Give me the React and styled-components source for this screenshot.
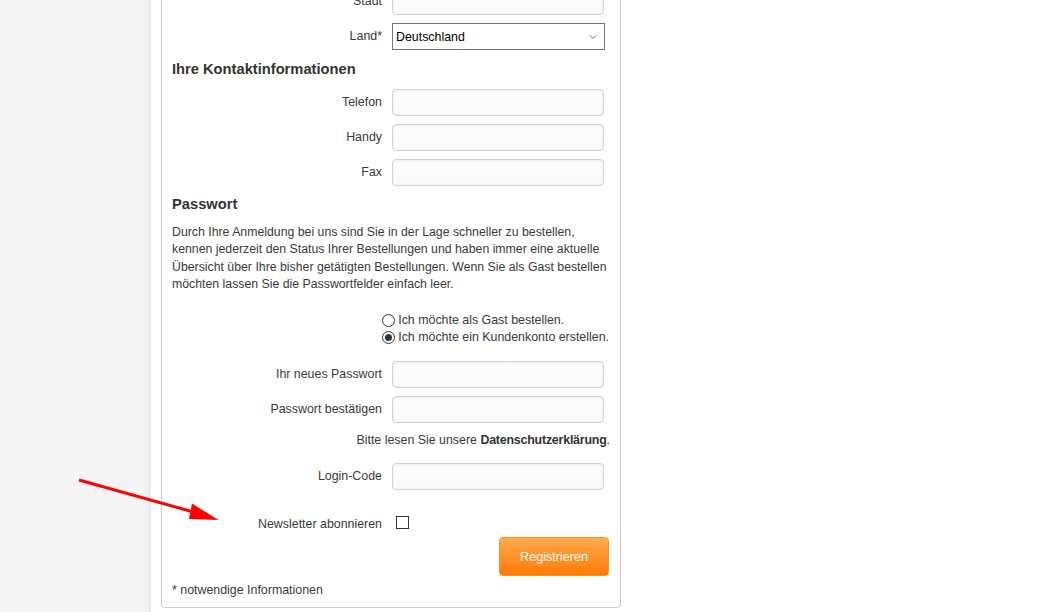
import React from "react";
import styled, { createGlobalStyle } from "styled-components";
import { ChevronDown } from "lucide-react";

const GlobalStyle = createGlobalStyle`
  html, body { margin: 0; padding: 0; }
  body {
    background: #f5f5f5;
    font-family: "Liberation Sans", Arial, sans-serif;
    color: #3a3a3a;
    overflow: hidden;
  }
`;

const Viewport = styled.div`
  position: relative;
  width: 1061px;
  height: 612px;
  overflow: hidden;
`;

const Page = styled.div`
  margin-left: 151px;
  min-height: 640px;
  background: #ffffff;
  box-shadow: -3px 0 6px rgba(0, 0, 0, 0.06);
  padding-left: 10px;
`;

const Panel = styled.div`
  width: 460px;
  box-sizing: border-box;
  margin-top: -13px;
  border: 1px solid #cccccc;
  border-radius: 4px;
  padding: 0 10px 8px 10px;
  display: flex;
  flex-direction: column;
`;

const FormRow = styled.div`
  display: grid;
  grid-template-columns: 210px 212px;
  column-gap: 10px;
  align-items: center;
  margin-top: ${(p) => p.$mt || 0}px;
`;

const Label = styled.label`
  text-align: right;
  font-size: 12.4px;
  line-height: 17px;
  color: #3a3a3a;
  white-space: nowrap;
`;

const TextInput = styled.input`
  box-sizing: border-box;
  width: 212px;
  height: 27px;
  border: 1px solid #d2d2d2;
  border-radius: 4px;
  background: linear-gradient(#fdfdfd, #fafafa);
  box-shadow: inset 0 1px 3px rgba(0, 0, 0, 0.07);
  outline: none;
  padding: 0 6px;
  font-family: inherit;
  font-size: 12.4px;
`;

const SelectWrap = styled.div`
  position: relative;
  width: 213px;
  height: 27px;
`;

const Select = styled.select`
  appearance: none;
  -webkit-appearance: none;
  box-sizing: border-box;
  width: 100%;
  height: 100%;
  border: 1px solid #777777;
  border-radius: 0;
  background: #ffffff;
  color: #000000;
  font-family: "Liberation Sans", Arial, sans-serif;
  font-size: 12.4px;
  padding: 0 0 0 3px;
  outline: none;
`;

const SelectArrow = styled.span`
  position: absolute;
  right: 6px;
  top: 8px;
  display: flex;
  pointer-events: none;
  color: #444;
`;

const Heading = styled.h3`
  margin: ${(p) => p.$mt || 0}px 0 0 0;
  font-size: 14.7px;
  line-height: 18px;
  font-weight: bold;
  color: #333333;
`;

const Paragraph = styled.p`
  margin: 11px 0 0 0;
  font-size: 12.3px;
  line-height: 17.3px;
  color: #3a3a3a;
  white-space: nowrap;
`;

const RadioGroup = styled.div`
  margin-top: 19px;
  display: flex;
  flex-direction: column;
  align-self: flex-end;
  margin-right: 1px;
`;

const RadioLine = styled.label`
  display: flex;
  align-items: center;
  gap: 3px;
  font-size: 12.4px;
  line-height: 17px;
  color: #3a3a3a;
`;

const RadioCircle = styled.span`
  box-sizing: border-box;
  width: 13px;
  height: 13px;
  border-radius: 50%;
  border: 1px solid #333333;
  background: #ffffff;
  display: flex;
  align-items: center;
  justify-content: center;
  &::after {
    content: "";
    width: 7px;
    height: 7px;
    border-radius: 50%;
    background: ${(p) => (p.$checked ? "#333333" : "transparent")};
  }
`;

const Note = styled.div`
  margin-top: ${(p) => p.$mt || 0}px;
  text-align: ${(p) => p.$align || "left"};
  font-size: 12.4px;
  line-height: 17px;
  color: #3a3a3a;
  b {
    color: #333;
    letter-spacing: -0.2px;
  }
`;

const CheckRow = styled.div`
  display: grid;
  grid-template-columns: 210px 212px;
  column-gap: 10px;
  align-items: start;
  margin-top: 26px;
`;

const Checkbox = styled.span`
  box-sizing: border-box;
  display: block;
  width: 13px;
  height: 13px;
  margin-left: 4px;
  border: 1px solid #333333;
  background: #ffffff;
`;

const Button = styled.button`
  align-self: flex-end;
  margin-top: 4px;
  margin-right: 1px;
  width: 110px;
  height: 39px;
  border: 1px solid #f7931e;
  border-radius: 4px;
  background: linear-gradient(#ffab4f, #ff7a05);
  color: #ffffff;
  font-family: "Liberation Sans", Arial, sans-serif;
  font-size: 12.6px;
  cursor: pointer;
`;

const ArrowOverlay = styled.svg`
  position: absolute;
  left: 0;
  top: 0;
  pointer-events: none;
`;

export default function App() {
  return (
    <>
      <GlobalStyle />
      <Viewport>
        <Page>
          <Panel>
            <FormRow>
              <Label>Stadt</Label>
              <TextInput />
            </FormRow>
            <FormRow $mt={8}>
              <Label>Land*</Label>
              <SelectWrap>
                <Select defaultValue="de">
                  <option value="de">Deutschland</option>
                </Select>
                <SelectArrow>
                  <ChevronDown size={12} strokeWidth={1.6} />
                </SelectArrow>
              </SelectWrap>
            </FormRow>

            <Heading $mt={10}>Ihre Kontaktinformationen</Heading>
            <FormRow $mt={11}>
              <Label>Telefon</Label>
              <TextInput />
            </FormRow>
            <FormRow $mt={8}>
              <Label>Handy</Label>
              <TextInput />
            </FormRow>
            <FormRow $mt={8}>
              <Label>Fax</Label>
              <TextInput />
            </FormRow>

            <Heading $mt={9}>Passwort</Heading>
            <Paragraph>
              Durch Ihre Anmeldung bei uns sind Sie in der Lage schneller zu bestellen,
              <br />
              kennen jederzeit den Status Ihrer Bestellungen und haben immer eine aktuelle
              <br />
              Übersicht über Ihre bisher getätigten Bestellungen. Wenn Sie als Gast bestellen
              <br />
              möchten lassen Sie die Passwortfelder einfach leer.
            </Paragraph>

            <RadioGroup>
              <RadioLine>
                <RadioCircle />
                Ich möchte als Gast bestellen.
              </RadioLine>
              <RadioLine>
                <RadioCircle $checked />
                Ich möchte ein Kundenkonto erstellen.
              </RadioLine>
            </RadioGroup>

            <FormRow $mt={15}>
              <Label>Ihr neues Passwort</Label>
              <TextInput type="password" />
            </FormRow>
            <FormRow $mt={8}>
              <Label>Passwort bestätigen</Label>
              <TextInput type="password" />
            </FormRow>
            <Note $mt={9} $align="right">
              Bitte lesen Sie unsere <b>Datenschutzerklärung</b>.
            </Note>
            <FormRow $mt={14}>
              <Label>Login-Code</Label>
              <TextInput />
            </FormRow>

            <CheckRow>
              <Label>Newsletter abonnieren</Label>
              <Checkbox />
            </CheckRow>
            <Button>Registrieren</Button>
            <Note $mt={6}>* notwendige Informationen</Note>
          </Panel>
        </Page>

        <ArrowOverlay width="1061" height="612" viewBox="0 0 1061 612">
          <line x1="79" y1="480" x2="197" y2="513" stroke="#ff0000" strokeWidth="3" />
          <polygon points="192,503.5 218.5,520 189,519" fill="#ff0000" />
        </ArrowOverlay>
      </Viewport>
    </>
  );
}
